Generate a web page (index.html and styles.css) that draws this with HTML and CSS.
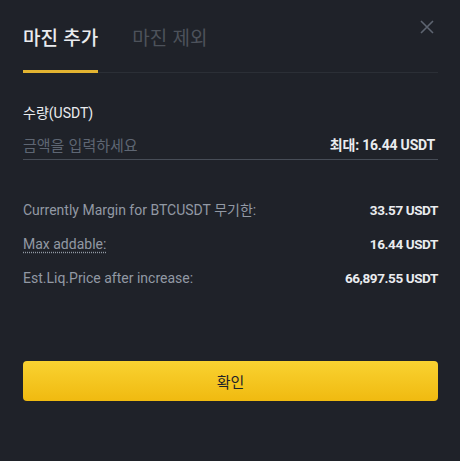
FILE: index.html
```html
<!DOCTYPE html>
<html lang="ko">
<head>
<meta charset="utf-8">
<link rel="stylesheet" href="styles.css">
</head>
<body>
<div class="modal">
  <div class="header">
    <div class="tab active">마진 추가</div>
    <div class="tab">마진 제외</div>
    <button class="close" aria-label="close">
      <svg width="14" height="14" viewBox="0 0 14 14"><path d="M1 1L13 13M13 1L1 13" stroke="currentColor" stroke-width="1.6" fill="none"/></svg>
    </button>
  </div>
  <div class="label">수량(USDT)</div>
  <div class="input-row">
    <span class="placeholder">금액을 입력하세요</span>
    <span class="max">최대: 16.44 USDT</span>
  </div>
  <div class="rows">
    <div class="row"><span class="k">Currently Margin for BTCUSDT 무기한:</span><span class="v">33.57 USDT</span></div>
    <div class="row"><span class="k dotted">Max addable:</span><span class="v">16.44 USDT</span></div>
    <div class="row"><span class="k">Est.Liq.Price after increase:</span><span class="v">66,897.55 USDT</span></div>
  </div>
  <button class="confirm">확인</button>
</div>
</body>
</html>
```
FILE: styles.css
```css
html, body {
  margin: 0;
  padding: 0;
  background: #1f2229;
}
body {
  font-family: Roboto, "Noto Sans", "Noto Sans CJK KR", sans-serif;
  color: #eaecef;
}
.modal {
  padding: 0 22px 0 23px;
  display: flex;
  flex-direction: column;
}
.header {
  display: flex;
  align-items: flex-start;
  padding-top: 24px;
  border-bottom: 1px solid #2b2f36;
  gap: 34px;
}
.tab {
  font-family: "Noto Sans CJK KR", sans-serif;
  font-size: 19px;
  line-height: 26px;
  color: #4d525b;
  padding-bottom: 20px;
  margin-bottom: -1px;
  border-bottom: 3px solid transparent;
}
.tab.active {
  color: #eaecef;
  font-weight: 500;
  border-bottom-color: #e3b431;
}
.close {
  margin-left: auto;
  margin-right: 4px;
  margin-top: -4px;
  padding: 0;
  border: 0;
  background: none;
  color: #5e6571;
  width: 14px;
  height: 14px;
  display: flex;
}
.label {
  margin-top: 30px;
  font-family: Roboto, "Noto Sans CJK KR", sans-serif;
  font-size: 14px;
  line-height: 20px;
  color: #eaecef;
}
.input-row {
  margin-top: 12px;
  display: flex;
  justify-content: space-between;
  align-items: center;
  line-height: 20px;
  padding-bottom: 4px;
  border-bottom: 1px solid #474d57;
}
.placeholder {
  font-family: "Noto Sans CJK KR", sans-serif;
  font-size: 15px;
  color: #5e6673;
}
.max {
  font-family: Roboto, "Noto Sans CJK KR", sans-serif;
  font-size: 14px;
  font-weight: 700;
  letter-spacing: -0.2px;
  color: #eaecef;
  margin-right: 3px;
}
.rows {
  margin-top: 40px;
  display: flex;
  flex-direction: column;
  gap: 14px;
}
.row {
  display: flex;
  justify-content: space-between;
  line-height: 20px;
}
.k {
  font-size: 14px;
  color: #9299a4;
}
.k.dotted {
  text-decoration: underline dotted #9299a4;
  text-underline-offset: 3px;
}
.v {
  font-size: 13.5px;
  font-weight: 700;
  letter-spacing: -0.4px;
  color: #eaecef;
}
.confirm {
  margin-top: 73px;
  height: 40px;
  border: 0;
  border-radius: 4px;
  background: linear-gradient(180deg, #f9d231 0%, #f0ba10 100%);
  font-family: "Noto Sans CJK KR", sans-serif;
  font-size: 15px;
  color: #1e2329;
}
```
